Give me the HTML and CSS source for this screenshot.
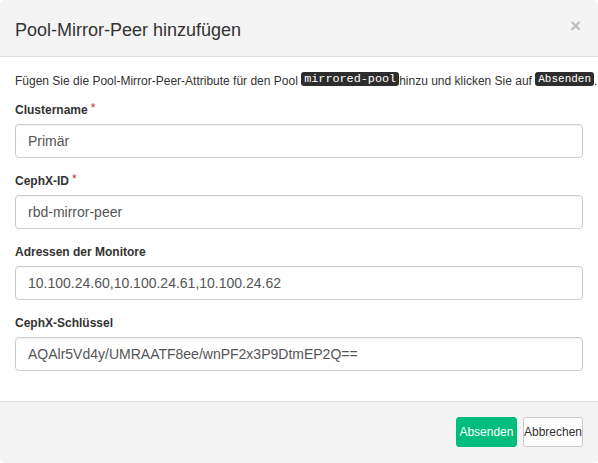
FILE: index.html
```html
<!DOCTYPE html>
<html lang="de">
<head>
<meta charset="utf-8">
<title>Pool-Mirror-Peer hinzufügen</title>
<link rel="stylesheet" href="styles.css">
</head>
<body>
<div class="modal">
  <div class="modal-header">
    <h4 class="modal-title">Pool-Mirror-Peer hinzufügen</h4>
    <button class="close" type="button" aria-label="Schließen">×</button>
  </div>
  <div class="modal-body">
    <p class="intro">Fügen Sie die Pool-Mirror-Peer-Attribute für den Pool <code>mirrored-pool</code>hinzu und klicken Sie auf <code class="code-sm">Absenden</code>.</p>
    <div class="form-group">
      <label class="control-label">Clustername<span class="required">*</span></label>
      <input class="form-control" type="text" value="Primär">
    </div>
    <div class="form-group">
      <label class="control-label">CephX-ID<span class="required">*</span></label>
      <input class="form-control" type="text" value="rbd-mirror-peer">
    </div>
    <div class="form-group">
      <label class="control-label">Adressen der Monitore</label>
      <input class="form-control" type="text" value="10.100.24.60,10.100.24.61,10.100.24.62">
    </div>
    <div class="form-group">
      <label class="control-label">CephX-Schlüssel</label>
      <input class="form-control" type="text" value="AQAlr5Vd4y/UMRAATF8ee/wnPF2x3P9DtmEP2Q==">
    </div>
  </div>
  <div class="modal-footer">
    <button class="btn btn-primary" type="button">Absenden</button>
    <button class="btn btn-default" type="button">Abbrechen</button>
  </div>
</div>
</body>
</html>
```

FILE: styles.css
```css
html, body {
  margin: 0;
  padding: 0;
  background: #ffffff;
}

body {
  font-family: "Liberation Sans", Arial, sans-serif;
  font-size: 12px;
  line-height: 17px;
  color: #333333;
}

.modal {
  width: 598px;
  height: 463px;
  box-sizing: border-box;
  display: flex;
  flex-direction: column;
  border-radius: 5px;
  overflow: hidden;
  background: #ffffff;
}

.modal-header {
  display: flex;
  align-items: flex-start;
  justify-content: space-between;
  background: #f4f4f4;
  padding: 17px 15px 13px 15px;
  border-bottom: 1px solid #dddddd;
}

.modal-title {
  margin: 0;
  font-size: 18px;
  line-height: 26px;
  font-weight: normal;
  color: #333333;
}

.close {
  border: 0;
  background: transparent;
  padding: 0;
  margin: -2px 2px 0 0;
  font-family: "Liberation Sans", Arial, sans-serif;
  font-size: 19px;
  font-weight: bold;
  line-height: 22px;
  color: #000000;
  opacity: 0.22;
  cursor: pointer;
}

.modal-body {
  padding: 15px 15px 15px 15px;
}

.intro {
  margin: 0 0 13px 0;
  height: 17px;
  line-height: 17px;
  white-space: nowrap;
}

code {
  display: inline-block;
  font-family: "Liberation Mono", "Courier New", monospace;
  font-size: 11.8px;
  line-height: 14px;
  padding: 0 3px;
  vertical-align: 3px;
  border-radius: 3px;
  background: #2d2d2d;
  color: #ffffff;
}

.code-sm {
  font-size: 11px;
}

.form-group {
  margin-bottom: 15px;
}

.control-label {
  display: block;
  height: 17px;
  margin-bottom: 5px;
  font-weight: bold;
  line-height: 17px;
  color: #333333;
}

.required {
  color: #c9302c;
  font-weight: normal;
  line-height: 0;
  margin-left: 3px;
  vertical-align: 2px;
}

.form-control {
  display: block;
  width: 100%;
  height: 34px;
  box-sizing: border-box;
  padding: 6px 12px;
  border: 1px solid #cccccc;
  border-radius: 4px;
  font-family: "Liberation Sans", Arial, sans-serif;
  font-size: 14px;
  color: #555555;
  background: #ffffff;
  box-shadow: inset 0 1px 1px rgba(0, 0, 0, 0.05);
  outline: none;
}

.modal-footer {
  flex: 1;
  display: flex;
  justify-content: flex-end;
  align-items: flex-start;
  gap: 6px;
  background: #f4f4f4;
  border-top: 1px solid #dddddd;
  padding: 15px 15px 15px 15px;
}

.btn {
  height: 30px;
  box-sizing: border-box;
  font-family: "Liberation Sans", Arial, sans-serif;
  font-size: 12px;
  line-height: 28px;
  border-radius: 3px;
  cursor: pointer;
}

.btn-primary {
  padding: 0 2.5px;
  background: #00bd7e;
  border: 1px solid #00bd7e;
  color: #ffffff;
}

.btn-default {
  padding: 0;
  background: #ffffff;
  border: 1px solid #cccccc;
  color: #333333;
}
```
